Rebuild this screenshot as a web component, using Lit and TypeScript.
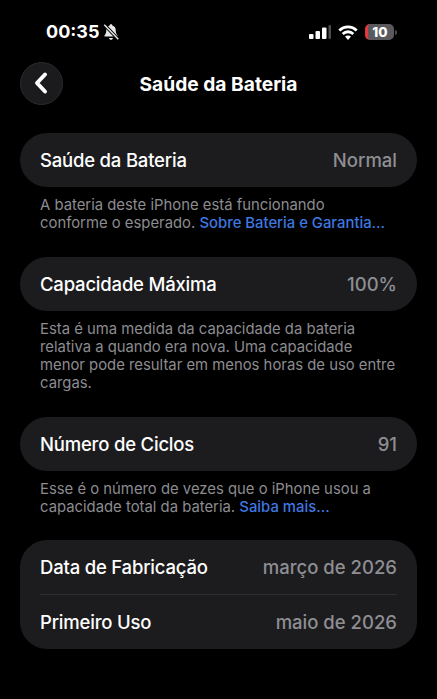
import { LitElement, html, css } from "lit";
import { customElement } from "lit/decorators.js";

@customElement("app-root")
export class AppRoot extends LitElement {
  static styles = css`
    :host { display: block; width: 437px; height: 699px; background: #000; color: #fff; font-family: Inter, "Liberation Sans", sans-serif; overflow: hidden; }
    .status { height: 58px; box-sizing: border-box; padding: 21px 40px 0 46px; display: flex; align-items: flex-start; justify-content: space-between; }
    .left { display: flex; align-items: center; gap: 3px; height: 22px; }
    .time { font-size: 18px; font-weight: 700; letter-spacing: 0; line-height: 22px; }
    .right { display: flex; align-items: center; gap: 7px; height: 22px; }
    .batt { width: 29px; height: 16px; box-sizing: border-box; border-radius: 5px; background: #5a5a5e; font-size: 13.500px; font-weight: 800; line-height: 16px; text-align: center; color: #fff; border-left: 3px solid #e5383b; padding-right: 2px; }
    .batt-wrap { display: flex; align-items: center; gap: 1px; }
    .nub { width: 2px; height: 5px; background: #4a4a4c; border-radius: 0 2px 2px 0; }
    .nav { height: 44px; margin-bottom: 28px; padding: 3px 20px 0; display: flex; align-items: center; position: relative; }
    .back { width: 43px; height: 43px; box-sizing: border-box; border-radius: 50%; background: #1b1b1d; border: 1px solid #2b2b2d; display: flex; align-items: center; justify-content: center; flex: none; }
    .title { position: absolute; left: 0; right: 0; top: 10px; text-align: center; font-size: 19.200px; font-weight: 700; line-height: 32px; }
    .content { padding: 0 20px; display: flex; flex-direction: column; }
    .card { background: #1c1c1e; border-radius: 27px; padding: 0 20px; }
    .row { height: 54px; display: flex; align-items: center; justify-content: space-between; font-size: 18.500px; font-weight: 500; letter-spacing: -0.2px; }
    .val { color: #8e8e93; font-weight: 500; letter-spacing: 0; }
    .sep { height: 1px; background: #2e2e30; }
    .note { margin: 0; padding: 9px 20px 0; font-size: 14.850px; line-height: 18px; color: #8c8c91; white-space: nowrap; }
    .note a { color: #3f78e0; font-weight: 500; text-decoration: none; }
    .g1 { height: 70px; } .g2 { height: 106px; } .g3 { height: 69px; }
  `;
  render() {
    return html`
      <div class="status">
        <div class="left">
          <span class="time">00:35</span>
          <svg width="18" height="18" viewBox="0 0 16 16">
            <path d="M8 1.200c.7 0 1.200.5 1.200 1.100 2 .5 3 2.200 3 4.200 0 2.200.6 3.400 1.600 4.600v.9H2.200v-.9c1-1.200 1.600-2.400 1.600-4.600 0-2 1-3.700 3-4.200C6.800 1.700 7.300 1.200 8 1.200zM6.300 13.300h3.400c0 1-.8 1.600-1.700 1.600s-1.700-.6-1.700-1.600z" fill="#e8e8e8"/>
            <path d="M2 1.500 14.500 14.500" stroke="#000" stroke-width="3"/>
            <path d="M2 1.500 14.500 14.500" stroke="#e8e8e8" stroke-width="1.300"/>
          </svg>
        </div>
        <div class="right">
          <svg width="22" height="14" viewBox="0 0 22 14">
            <rect x="0" y="9" width="4.500" height="5" rx="1" fill="#fff"/>
            <rect x="6.500" y="6" width="4.500" height="8" rx="1" fill="#fff"/>
            <rect x="13" y="2.500" width="4.500" height="11.500" rx="1" fill="#fff"/>
            <rect x="19.500" y="0" width="2.500" height="14" rx="1" fill="#4e4e50"/>
          </svg>
          <svg width="20" height="15" viewBox="0 0 20 15" fill="none" stroke="#fff" stroke-width="2.800">
            <path d="M1.300 5.400C6.100 .8 13.900 .8 18.700 5.400"/>
            <path d="M4.700 8.900C7.700 6 12.300 6 15.300 8.900"/>
            <path d="M10 15 7 11.500C8.800 10 11.200 10 13 11.500Z" fill="#fff" stroke="none"/>
          </svg>
          <div class="batt-wrap"><div class="batt">10</div><div class="nub"></div></div>
        </div>
      </div>
      <div class="nav">
        <div class="back">
          <svg width="16" height="24" viewBox="0 0 16 24" fill="none" stroke="#fff" stroke-width="4" stroke-linecap="round" stroke-linejoin="round"><path d="M11 3.500 3 12l8 8.500"/></svg>
        </div>
        <div class="title">Saúde da Bateria</div>
      </div>
      <div class="content">
        <div class="card"><div class="row"><span>Saúde da Bateria</span><span class="val">Normal</span></div></div>
        <div class="g1"><p class="note">A bateria deste iPhone está funcionando<br>conforme o esperado. <a>Sobre Bateria e Garantia...</a></p></div>
        <div class="card"><div class="row"><span>Capacidade Máxima</span><span class="val">100%</span></div></div>
        <div class="g2"><p class="note">Esta é uma medida da capacidade da bateria<br>relativa a quando era nova. Uma capacidade<br>menor pode resultar em menos horas de uso entre<br>cargas.</p></div>
        <div class="card"><div class="row"><span>Número de Ciclos</span><span class="val">91</span></div></div>
        <div class="g3"><p class="note">Esse é o número de vezes que o iPhone usou a<br>capacidade total da bateria. <a>Saiba mais...</a></p></div>
        <div class="card">
          <div class="row"><span>Data de Fabricação</span><span class="val">março de 2026</span></div>
          <div class="sep"></div>
          <div class="row"><span>Primeiro Uso</span><span class="val">maio de 2026</span></div>
        </div>
      </div>
    `;
  }
}
